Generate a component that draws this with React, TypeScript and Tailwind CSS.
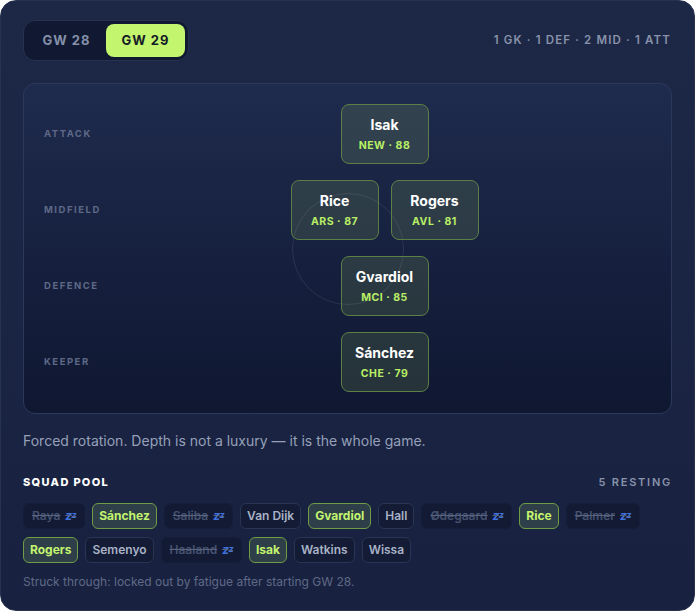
import React from "react";

type Player = { name: string; team: string; rating: number };

const lines: { label: string; players: Player[] }[] = [
  { label: "ATTACK", players: [{ name: "Isak", team: "NEW", rating: 88 }] },
  {
    label: "MIDFIELD",
    players: [
      { name: "Rice", team: "ARS", rating: 87 },
      { name: "Rogers", team: "AVL", rating: 81 },
    ],
  },
  { label: "DEFENCE", players: [{ name: "Gvardiol", team: "MCI", rating: 85 }] },
  { label: "KEEPER", players: [{ name: "Sánchez", team: "CHE", rating: 79 }] },
];

type ChipState = "picked" | "open" | "resting";
const pool: { name: string; state: ChipState }[][] = [
  [
    { name: "Raya", state: "resting" },
    { name: "Sánchez", state: "picked" },
    { name: "Saliba", state: "resting" },
    { name: "Van Dijk", state: "open" },
    { name: "Gvardiol", state: "picked" },
    { name: "Hall", state: "open" },
    { name: "Ødegaard", state: "resting" },
    { name: "Rice", state: "picked" },
    { name: "Palmer", state: "resting" },
  ],
  [
    { name: "Rogers", state: "picked" },
    { name: "Semenyo", state: "open" },
    { name: "Haaland", state: "resting" },
    { name: "Isak", state: "picked" },
    { name: "Watkins", state: "open" },
    { name: "Wissa", state: "open" },
  ],
];

function PlayerCard({ p }: { p: Player }) {
  return (
    <div className="w-[88px] h-[60px] rounded-lg border border-[#5d7f45] bg-[rgba(195,245,111,0.12)] flex flex-col items-center justify-center gap-[5px]">
      <div className="text-[14px] leading-[18px] font-bold text-white">{p.name}</div>
      <div className="text-[10.5px] leading-[13px] font-bold tracking-[0.05em] text-[#b9ee66]">
        {p.team} · {p.rating}
      </div>
    </div>
  );
}

function Chip({ name, state }: { name: string; state: ChipState }) {
  if (state === "picked") {
    return (
      <div className="h-[26px] px-[6px] rounded-md border border-[#6f9c45] bg-[#2f3f49] text-[12px] font-bold text-[#c3f56f] flex items-center">
        {name}
      </div>
    );
  }
  if (state === "resting") {
    return (
      <div className="h-[26px] px-[8px] rounded-md border border-[#151e38] bg-[#121a34] text-[12px] font-semibold text-[#465270] flex items-center gap-[5px] line-through decoration-[#59647f]">
        <span>{name}</span>
        <span className="italic text-[#3f70dc] text-[12px] font-bold leading-none tracking-[-0.05em]">
          z<span className="text-[9px] align-top">z</span>
        </span>
      </div>
    );
  }
  return (
    <div className="h-[26px] px-[6px] rounded-md border border-[#2a3553] bg-[#131b35] text-[12px] font-semibold text-[#a9b2c6] flex items-center">
      {name}
    </div>
  );
}

export default function App() {
  return (
    <div className="w-[695px] h-[611px] bg-white" style={{ fontFamily: "Inter, 'Noto Sans', sans-serif" }}>
      <div className="w-full h-full rounded-2xl border border-[#27324f] bg-gradient-to-b from-[#1d2846] to-[#182140] px-[22px] pt-[19px] flex flex-col">
        {/* header: gameweek switch + formation */}
        <div className="flex items-center justify-between">
          <div className="flex p-[3px] rounded-xl border border-[#27324f] bg-[#111932]">
            <div className="w-[79px] h-[33px] flex items-center justify-center text-[13px] font-bold tracking-[0.08em] text-[#8590a9]">
              GW 28
            </div>
            <div className="w-[79px] h-[33px] rounded-lg bg-[#c3f56f] flex items-center justify-center text-[13px] font-bold tracking-[0.08em] text-[#141a26]">
              GW 29
            </div>
          </div>
          <div className="text-[11.5px] font-semibold tracking-[0.1em] text-[#8892aa] pr-[1px]">
            1 GK · 1 DEF · 2 MID · 1 ATT
          </div>
        </div>

        {/* pitch */}
        <div className="relative mt-[22px] rounded-xl border border-[#2c385a] bg-gradient-to-b from-[#1f2b4e] to-[#0f1731] px-5 pt-5 pb-[21px] overflow-hidden">
          <div className="absolute left-1/2 top-1/2 w-[112px] h-[112px] -translate-x-1/2 -translate-y-1/2 rounded-full border border-[rgba(255,255,255,0.09)]" />
          <div className="relative flex flex-col gap-4">
            {lines.map((line) => (
              <div key={line.label} className="flex items-center h-[60px]">
                <div className="w-[74px] text-[9.5px] font-bold tracking-[0.16em] text-[#5d6987]">{line.label}</div>
                <div className="flex-1 flex justify-center gap-3">
                  {line.players.map((p) => (
                    <PlayerCard key={p.name} p={p} />
                  ))}
                </div>
              </div>
            ))}
          </div>
        </div>

        <p className="mt-[17px] text-[14px] leading-[20px] text-[#96a0b8]">
          Forced rotation. Depth is not a luxury — it is the whole game.
        </p>

        <div className="mt-[23px] flex items-center justify-between">
          <div className="text-[11px] leading-[16px] font-extrabold tracking-[0.12em] text-white">SQUAD POOL</div>
          <div className="text-[11px] leading-[16px] font-semibold tracking-[0.16em] text-[#8892aa]">5 RESTING</div>
        </div>

        <div className="mt-[13px] flex flex-col gap-[8px]">
          {pool.map((row, i) => (
            <div key={i} className="flex gap-[7px]">
              {row.map((c) => (
                <Chip key={c.name} name={c.name} state={c.state} />
              ))}
            </div>
          ))}
        </div>

        <p className="mt-[11px] text-[12px] leading-[16px] text-[#5f6a86]">
          Struck through: locked out by fatigue after starting GW 28.
        </p>
      </div>
    </div>
  );
}
